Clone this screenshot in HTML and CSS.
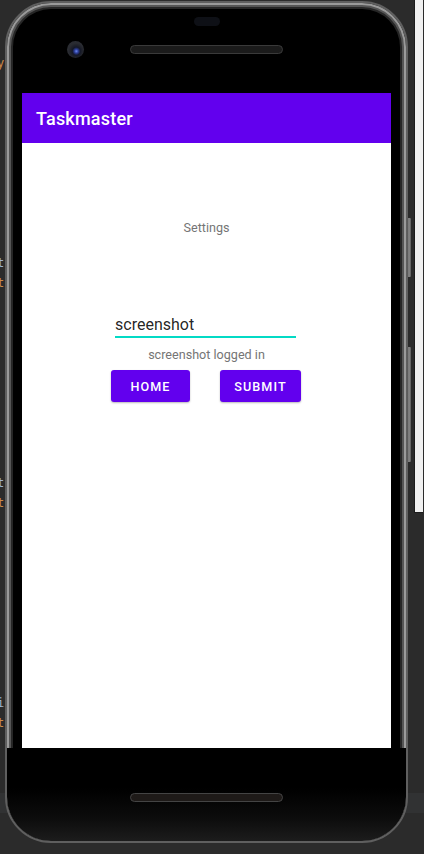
FILE: index.html
```html
<!DOCTYPE html>
<html lang="en">
<head>
<meta charset="utf-8">
<title>Taskmaster</title>
<link rel="stylesheet" href="styles.css">
</head>
<body>
<div class="ide">
  <div class="gutter">
    <div class="code-line"></div>
    <div class="code-line"></div>
    <div class="code-line kw">y</div>
    <div class="code-line"></div><div class="code-line"></div><div class="code-line"></div>
    <div class="code-line"></div><div class="code-line"></div><div class="code-line"></div>
    <div class="code-line"></div><div class="code-line"></div><div class="code-line"></div>
    <div class="code-line id">t</div>
    <div class="code-line kw">t.</div>
    <div class="code-line"></div><div class="code-line"></div><div class="code-line"></div>
    <div class="code-line"></div><div class="code-line"></div><div class="code-line"></div>
    <div class="code-line"></div><div class="code-line"></div><div class="code-line"></div>
    <div class="code-line id">t</div>
    <div class="code-line kw">t.</div>
    <div class="code-line"></div><div class="code-line"></div><div class="code-line"></div>
    <div class="code-line"></div><div class="code-line"></div><div class="code-line"></div>
    <div class="code-line"></div><div class="code-line"></div><div class="code-line"></div>
    <div class="code-line id">i</div>
    <div class="code-line kw">t.</div>
  </div>

  <div class="phone">
    <div class="bezel-top">
      <span class="sensor"></span>
      <div class="ear-row">
        <span class="camera"></span>
        <span class="speaker"></span>
        <span></span>
      </div>
    </div>

    <div class="screen">
      <header class="appbar">Taskmaster</header>
      <main class="content">
        <p class="caption">Settings</p>
        <div class="field">screenshot</div>
        <p class="caption status">screenshot logged in</p>
        <div class="actions">
          <button class="btn btn-home" type="button">HOME</button>
          <button class="btn btn-submit" type="button">SUBMIT</button>
        </div>
      </main>
    </div>

    <div class="bezel-bottom">
      <span class="speaker"></span>
    </div>
  </div>

  <div class="side-keys">
    <span class="key key-power"></span>
    <span class="key key-volume"></span>
  </div>

  <div class="panel"></div>
</div>
</body>
</html>
```

FILE: styles.css
```css
* { box-sizing: border-box; }

html, body {
  margin: 0;
  padding: 0;
}

body {
  width: 424px;
  height: 854px;
  overflow: hidden;
  background:
    linear-gradient(to bottom, #2b2b2b 0, #2b2b2b 793px, #313233 793px, #313233 813px, #2b2b2b 813px);
  font-family: Roboto, "Noto Sans", "Liberation Sans", sans-serif;
}

.ide {
  display: flex;
  align-items: flex-start;
  height: 854px;
}

/* IDE code peeking from the left */
.gutter {
  width: 5px;
  flex: none;
  overflow: hidden;
  padding-top: 13px;
  font-family: "DejaVu Sans Mono", "Liberation Mono", monospace;
  font-size: 12px;
}
.code-line {
  height: 20px;
  line-height: 20px;
  white-space: nowrap;
  text-indent: -3px;
}
.code-line.id { color: #9fb4cf; }
.code-line.kw { color: #cc8a4a; }

/* Phone */
.phone {
  width: 403px;
  height: 842px;
  margin-top: 1px;
  flex: none;
  display: flex;
  flex-direction: column;
  border-radius: 46px;
  border: 2px solid #5f5f5f;
  background: #000;
  box-shadow:
    inset 0 0 0 2px #9a9a9a,
    inset 0 0 0 4px #555,
    inset 0 0 0 6px #262626;
  overflow: hidden;
}

.bezel-top {
  height: 90px;
  flex: none;
  display: flex;
  flex-direction: column;
  align-items: center;
}
.sensor {
  display: block;
  width: 26px;
  height: 9px;
  margin-top: 14px;
  border-radius: 5px;
  background: #0e1016;
}
.ear-row {
  align-self: stretch;
  display: grid;
  grid-template-columns: 1fr auto 1fr;
  align-items: center;
  margin-top: 15px;
  height: 17px;
}
.camera {
  justify-self: start;
  margin-left: 60px;
  width: 17px;
  height: 17px;
  border-radius: 50%;
  background: radial-gradient(circle at 55% 60%, #6a88f0 0, #2b3c96 2px, #141828 4px, #20222a 6px, #2a2c32 8px);
}
.speaker {
  display: block;
  width: 153px;
  height: 9px;
  border-radius: 5px;
  background: #1b1b1b;
  border: 1px solid #3a3a3a;
}

.screen {
  width: 369px;
  height: 655px;
  margin-left: 15px;
  flex: none;
  background: #fff;
  display: flex;
  flex-direction: column;
}

.appbar {
  height: 50px;
  flex: none;
  background: #6200ee;
  color: #fff;
  display: flex;
  align-items: center;
  padding-left: 14px;
  font-size: 18px;
  font-weight: 500;
  letter-spacing: 0.2px;
}

.content {
  display: flex;
  flex-direction: column;
  align-items: center;
  padding-top: 77px;
}

.caption {
  margin: 0;
  font-size: 12.6px;
  line-height: 15px;
  color: #757575;
}

.field {
  margin-top: 80px;
  margin-right: 2px;
  width: 181px;
  font-size: 16px;
  line-height: 19px;
  color: rgba(0, 0, 0, 0.87);
  padding-bottom: 2px;
  border-bottom: 2px solid #03dac5;
}

.status {
  margin-top: 9px;
}

.actions {
  display: flex;
  gap: 30px;
  margin-top: 8px;
  margin-right: 1px;
}

.btn {
  height: 32px;
  border: none;
  border-radius: 3px;
  background: #6200ee;
  color: #fff;
  font-family: Roboto, "Noto Sans", sans-serif;
  font-size: 12.6px;
  font-weight: 500;
  letter-spacing: 1.1px;
  padding: 0;
  box-shadow: 0 1px 2px rgba(0, 0, 0, 0.28);
}
.btn-home { width: 79px; }
.btn-submit { width: 81px; }

.bezel-bottom {
  flex: 1;
  display: flex;
  justify-content: center;
  align-items: flex-start;
  background: linear-gradient(to bottom, #000 0, #000 40px, #0c0c0c 70px, #1c1c1c 100%);
}
.bezel-bottom .speaker {
  margin-top: 45px;
  width: 153px;
  height: 9px;
  background: #1e1a18;
  border-color: #444;
}

/* Side keys of the phone */
.side-keys {
  width: 4px;
  margin-left: -1px;
  flex: none;
  display: flex;
  flex-direction: column;
}
.key {
  display: block;
  width: 4px;
  border-radius: 1px;
  background: linear-gradient(to right, #4a4a4a, #8c8c8c, #5a5a5a);
}
.key-power {
  margin-top: 218px;
  height: 59px;
}
.key-volume {
  margin-top: 70px;
  height: 115px;
}

/* IDE panel on the right */
.panel {
  width: 9px;
  height: 513px;
  margin-left: 3px;
  flex: none;
  background: #f0f0f0;
  border-left: 1px solid #1c1c1c;
  border-bottom: 1px solid #1c1c1c;
}
```
